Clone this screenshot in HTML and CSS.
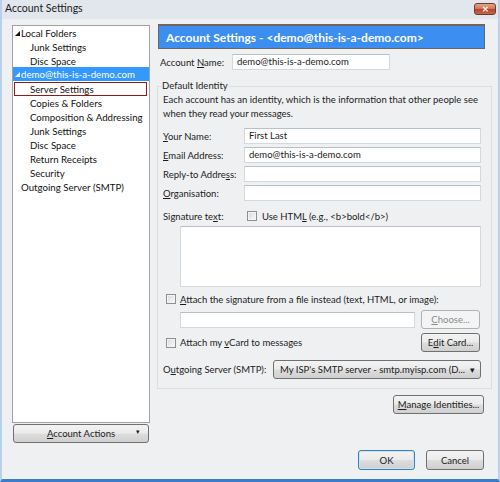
FILE: index.html
```html
<!DOCTYPE html>
<html>
<head>
<meta charset="utf-8">
<link rel="stylesheet" href="styles.css">
</head>
<body>
<div class="window">
  <div class="titlebar">
    <span class="title">Account Settings</span>
    <span class="close">✕</span>
  </div>
  <div class="main">
    <div class="sidebar">
      <div class="tree">
        <div class="row lvl0"><svg class="twisty" width="5" height="5" viewBox="0 0 5 5"><polygon points="5,0 5,5 0,5" fill="#111"/></svg>Local Folders</div>
        <div class="row lvl1">Junk Settings</div>
        <div class="row lvl1">Disc Space</div>
        <div class="row lvl0 selected"><svg class="twisty" width="5" height="5" viewBox="0 0 5 5"><polygon points="5,0 5,5 0,5" fill="#fff"/></svg>demo@this-is-a-demo.com</div>
        <div class="row lvl1 focused">Server Settings</div>
        <div class="row lvl1">Copies &amp; Folders</div>
        <div class="row lvl1">Composition &amp; Addressing</div>
        <div class="row lvl1">Junk Settings</div>
        <div class="row lvl1">Disc Space</div>
        <div class="row lvl1">Return Receipts</div>
        <div class="row lvl1">Security</div>
        <div class="row lvl0 plain">Outgoing Server (SMTP)</div>
      </div>
      <div class="btn actions"><span class="actions-label"><span class="ak">A</span>ccount Actions</span><span class="drop">▾</span></div>
    </div>
    <div class="content">
      <div class="header">Account Settings - &lt;demo@this-is-a-demo.com&gt;</div>
      <div class="name-row">
        <span class="name-lbl">Account <span class="ak">N</span>ame:</span>
        <div class="field name-field">demo@this-is-a-demo.com</div>
      </div>
      <fieldset class="group">
        <legend class="legend">Default Identity</legend>
        <p class="intro">Each account has an identity, which is the information that other people see<br>when they read your messages.</p>
        <div class="form-row first">
          <span class="lbl"><span class="ak">Y</span>our Name:</span>
          <div class="field grow">First Last</div>
        </div>
        <div class="form-row">
          <span class="lbl"><span class="ak">E</span>mail Address:</span>
          <div class="field grow">demo@this-is-a-demo.com</div>
        </div>
        <div class="form-row">
          <span class="lbl">Reply-to Addre<span class="ak">s</span>s:</span>
          <div class="field grow"></div>
        </div>
        <div class="form-row">
          <span class="lbl"><span class="ak">O</span>rganisation:</span>
          <div class="field grow"></div>
        </div>
        <div class="sig-row">
          <span class="sig-lbl">Signature te<span class="ak">x</span>t:</span>
          <span class="checkbox"></span>
          <span class="cb-text">Use HTM<span class="ak">L</span> (e.g., &lt;b&gt;bold&lt;/b&gt;)</span>
        </div>
        <div class="textarea"></div>
        <div class="cb-row">
          <span class="checkbox"></span>
          <span class="cb-text2"><span class="ak">A</span>ttach the signature from a file instead (text, HTML, or image):</span>
        </div>
        <div class="file-row">
          <div class="field file-field"></div>
          <div class="btn disabled choose"><span class="ak">C</span>hoose...</div>
        </div>
        <div class="vcard-row">
          <span class="checkbox"></span>
          <span class="cb-text2">Attach my <span class="ak">v</span>Card to messages</span>
          <div class="btn edit">E<span class="ak">d</span>it Card...</div>
        </div>
        <div class="smtp-row">
          <span class="smtp-lbl">O<span class="ak">u</span>tgoing Server (SMTP):</span>
          <div class="select"><span class="select-text">My ISP's SMTP server - smtp.myisp.com (D...</span><span class="drop">▾</span></div>
        </div>
      </fieldset>
      <div class="manage-row">
        <div class="btn manage"><span class="ak">M</span>anage Identities...</div>
      </div>
      <div class="dialog-buttons">
        <div class="btn ok">OK</div>
        <div class="btn cancel">Cancel</div>
      </div>
    </div>
  </div>
</div>
</body>
</html>
```

FILE: styles.css
```css
* { box-sizing: border-box; }
html, body { margin: 0; padding: 0; }
body {
  width: 500px;
  height: 482px;
  overflow: hidden;
  font-family: "Lato", "Noto Sans", sans-serif;
  font-size: 9.5px;
  color: #1b1b1b;
}
.window {
  width: 500px;
  height: 482px;
  background: #eff0f2;
  border-left: 2px solid #b7d1ec;
  border-right: 2px solid #b7d1ec;
  border-bottom: 3px solid #3a7dcc;
  display: flex;
  flex-direction: column;
}
.titlebar {
  height: 19px;
  flex: none;
  background: #e2e6ed;
  display: flex;
  align-items: flex-start;
  padding-left: 3px;
}
.title {
  font-size: 10.5px;
  line-height: 16px;
  color: #1a1a1a;
}
.close {
  margin-left: auto;
  margin-right: 2px;
  margin-top: 3px;
  width: 22px;
  height: 12px;
  border: 1px solid #6b3b2b;
  border-radius: 3px;
  background: linear-gradient(#e3a58c 0%, #d07a5c 45%, #b8462c 55%, #c8654a 100%);
  color: #fff;
  font-size: 8px;
  font-weight: bold;
  line-height: 10px;
  text-align: center;
}
.main {
  flex: 1;
  display: flex;
  padding: 6px 0 0 10px;
  min-height: 0;
}
.sidebar {
  width: 138px;
  flex: none;
  display: flex;
  flex-direction: column;
}
.tree {
  height: 398px;
  background: #fff;
  border: 1px solid #a2a2a2;
  font-size: 9.7px;
}
.row {
  height: 14px;
  line-height: 14px;
  white-space: nowrap;
  color: #111;
}
.lvl0 {
  display: flex;
  align-items: center;
  padding-left: 2px;
}
.lvl0.plain { padding-left: 8px; }
.twisty {
  flex: none;
  margin-right: 1px;
}
.lvl1 { padding-left: 17px; }
.selected {
  background: #3399ff;
  color: #fff;
  margin-top: -1px;
  margin-bottom: 1px;
}
.focused {
  border: 1px solid #8b1c1c;
  margin: 0 2px 0 1px;
  padding-left: 15px;
  line-height: 12px;
}
.btn {
  border: 1px solid #707070;
  border-radius: 3px;
  background: linear-gradient(#f3f3f3 0%, #ebebeb 48%, #dddddd 52%, #d0d0d0 100%);
  display: flex;
  align-items: center;
  justify-content: center;
  color: #1b1b1b;
  white-space: nowrap;
}
.actions {
  margin: 1px 1px 0 1px;
  height: 19px;
  position: relative;
}
.actions .drop {
  position: absolute;
  right: 8px;
  top: 2px;
  font-size: 7px;
}
.ak { text-decoration: underline; }
.content {
  margin-left: 7px;
  width: 340px;
  flex: none;
  display: flex;
  flex-direction: column;
}
.header {
  margin: -1px 12px 0 1px;
  height: 25px;
  flex: none;
  background: #3c8ef0;
  border: 1px solid #6f655c;
  border-top-width: 2px;
  color: #fff;
  font-weight: bold;
  font-size: 12px;
  padding-left: 7px;
  display: flex;
  align-items: center;
  white-space: nowrap;
}
.name-row {
  display: flex;
  align-items: center;
  margin-top: 5px;
  height: 16px;
  padding-left: 3px;
}
.name-lbl { width: 72px; }
.field {
  height: 16px;
  background: #fff;
  border: 1px solid #d3d9e0;
  border-top-color: #b9c0c8;
  padding-left: 4px;
  line-height: 14px;
  white-space: nowrap;
  overflow: hidden;
}
.name-field { width: 158px; }
.group {
  margin: 9px 5px 0 0;
  padding: 0 10px 9px 5px;
  border: 1px solid #dcdddf;
  min-width: 0;
}
.legend {
  padding: 0 1px;
  margin-left: -2px;
  line-height: 14px;
}
.intro {
  margin: 0;
  line-height: 14px;
  white-space: nowrap;
}
.form-row {
  display: flex;
  align-items: center;
  height: 16px;
  margin-top: 3px;
}
.form-row.first { margin-top: 7px; }
.lbl { width: 81px; flex: none; }
.grow { flex: 1; }
.sig-row {
  display: flex;
  align-items: center;
  height: 14px;
  margin-top: 8px;
}
.sig-lbl { width: 84px; flex: none; }
.checkbox {
  width: 10px;
  height: 10px;
  flex: none;
  border: 1px solid #8f8f8f;
  background: linear-gradient(135deg, #d8d8d8, #fbfbfb);
  box-shadow: inset 0 0 0 1px #f4f4f4;
}
.cb-text { margin-left: 5px; white-space: nowrap; }
.cb-text2 { margin-left: 4px; white-space: nowrap; }
.textarea {
  margin: 3px 0 0 17px;
  height: 61px;
  background: #fff;
  border: 1px solid #d3d9e0;
  border-top-color: #b9c0c8;
}
.cb-row {
  margin-top: 5px;
  height: 14px;
  display: flex;
  align-items: center;
  padding-left: 3px;
}
.file-row {
  margin-top: 4px;
  height: 19px;
  display: flex;
  align-items: center;
  padding-left: 17px;
}
.file-field { width: 235px; }
.choose {
  margin-left: auto;
  margin-right: 1px;
  width: 59px;
  height: 19px;
}
.disabled {
  border-color: #adb2b5;
  background: #f4f4f4;
  color: #8a8a8a;
}
.vcard-row {
  margin-top: 4px;
  height: 19px;
  display: flex;
  align-items: center;
  padding-left: 3px;
}
.edit {
  margin-left: auto;
  margin-right: 1px;
  width: 59px;
  height: 19px;
}
.smtp-row {
  margin-top: 8px;
  height: 19px;
  display: flex;
  align-items: center;
}
.smtp-lbl { width: 110px; flex: none; white-space: nowrap; }
.select {
  flex: 1;
  height: 19px;
  border: 1px solid #707070;
  border-radius: 3px;
  background: linear-gradient(#f3f3f3 0%, #ebebeb 48%, #dddddd 52%, #d0d0d0 100%);
  display: flex;
  align-items: center;
  padding: 0 5px 0 6px;
  white-space: nowrap;
}
.select-text { flex: 1; overflow: hidden; }
.select .drop { font-size: 9px; margin-left: 4px; }
.manage-row {
  display: flex;
  justify-content: flex-end;
  margin: 6px 13px 0 0;
}
.manage {
  width: 91px;
  height: 19px;
}
.dialog-buttons {
  margin: auto 13px 9px 0;
  display: flex;
  justify-content: flex-end;
  gap: 11px;
}
.ok {
  width: 57px;
  height: 20px;
  border-color: #3c7fb1;
  box-shadow: inset 0 0 0 1px #c6e4f7;
}
.cancel {
  width: 58px;
  height: 20px;
}
```
